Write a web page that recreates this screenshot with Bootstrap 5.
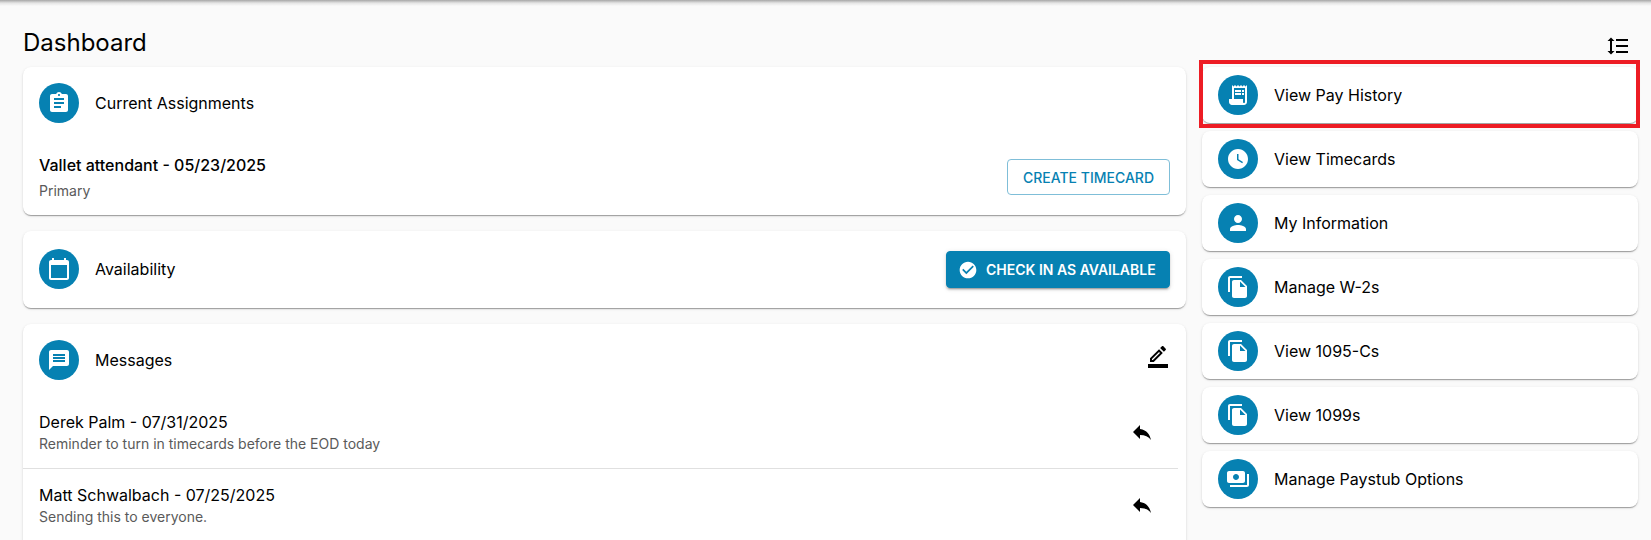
<!DOCTYPE html>
<html lang="en">
<head>
<meta charset="utf-8">
<title>Dashboard</title>
<link href="https://cdn.jsdelivr.net/npm/bootstrap@5.3.0/dist/css/bootstrap.min.css" rel="stylesheet">
<style>
html,body{height:540px;overflow:hidden}
body{background:#fafafa;font-family:Inter,"Noto Sans",sans-serif;color:#000}
.topshade{height:6px;background:linear-gradient(#a6a6a6,#e4e4e4 50%,#fafafa)}
.shell{padding:0 12px 0 23px;gap:16px}
.leftcol{width:1163px;flex:none}
.rightcol{width:436px;flex:none}
.pagetitle{font-size:24px;font-weight:400;line-height:32px;margin:0;padding-top:21px;height:61px}
.sorter{height:61px;padding-top:28px;padding-right:8px}
.panel{background:#fff;border-radius:8px;box-shadow:0 2px 1px -1px rgba(0,0,0,.2),0 1px 1px 0 rgba(0,0,0,.14),0 1px 3px 0 rgba(0,0,0,.12)}
.leftcol .panel+.panel{margin-top:16px}
.disc{width:40px;height:40px;border-radius:50%;background:#0681b2;flex:none}
.disc svg{width:24px;height:24px;fill:#fff}
.headrow{height:72px;padding:0 16px;gap:16px;font-size:16px}
.headrow.tall{height:77px;padding-bottom:1px}
.assign{padding:0 16px;height:76px}
.assign .ttl{font-size:16px;font-weight:500;line-height:24px;margin-top:-1px}
.muted{font-size:14px;color:#5a5a5a;line-height:20px}
.assign .muted{margin-top:4px}
.btn-outline-tc{--bs-btn-color:#0681b2;--bs-btn-border-color:#7fbed8;--bs-btn-hover-color:#0681b2;--bs-btn-hover-bg:#eef7fb;--bs-btn-hover-border-color:#7fbed8;font-size:14px;font-weight:500;height:36px;width:163px;padding:0;border-radius:4px;text-transform:uppercase}
.btn-fill-tc{--bs-btn-color:#fff;--bs-btn-bg:#0681b2;--bs-btn-border-color:#0681b2;--bs-btn-hover-color:#fff;--bs-btn-hover-bg:#0681b2;--bs-btn-hover-border-color:#0681b2;font-size:14px;font-weight:600;height:37px;width:224px;margin-top:1px;padding:0 0 0 11px;border-radius:4px;text-transform:uppercase;gap:8px;box-shadow:0 3px 1px -2px rgba(0,0,0,.2),0 2px 2px 0 rgba(0,0,0,.14),0 1px 5px 0 rgba(0,0,0,.12)}
.btn-fill-tc svg{width:20px;height:20px;fill:#fff}
.glyph{fill:#000;flex:none}
.penup{margin-bottom:8px}
.msgitem{margin:0 8px 0 0;padding:0 0 0 16px;height:72px}
.msgitem+.msgitem{border-top:1px solid #e0e0e0;height:73px}
.msglist{padding-bottom:24px}
.msgname{font-size:16px;line-height:24px}
.replyslot{width:36px;margin-right:18px}
.navitem{height:56px;padding:0 16px;gap:16px;font-size:16px;margin-bottom:8px}
.annot{position:absolute;left:-3px;right:-2px;top:-7px;bottom:-5px;border:4px solid #ed1c24;pointer-events:none}
</style>
</head>
<body>
<div class="topshade"></div>
<div class="d-flex shell">
  <main class="leftcol">
    <h1 class="pagetitle">Dashboard</h1>
    <section class="panel">
      <div class="d-flex align-items-center headrow">
        <span class="disc d-flex align-items-center justify-content-center"><svg viewBox="0 0 24 24"><path d="M19 3h-4.18C14.4 1.84 13.3 1 12 1c-1.3 0-2.4.84-2.82 2H5c-1.1 0-2 .9-2 2v14c0 1.1.9 2 2 2h14c1.1 0 2-.9 2-2V5c0-1.1-.9-2-2-2zm-7 0c.55 0 1 .45 1 1s-.45 1-1 1-1-.45-1-1 .45-1 1-1zm2 14H7v-2h7v2zm3-4H7v-2h10v2zm0-4H7V7h10v2z"/></svg></span>
        <span>Current Assignments</span>
      </div>
      <div class="d-flex justify-content-between align-items-center assign">
        <div><div class="ttl">Vallet attendant - 05/23/2025</div><div class="muted">Primary</div></div>
        <button type="button" class="btn btn-outline-tc">Create Timecard</button>
      </div>
    </section>
    <section class="panel">
      <div class="d-flex align-items-center headrow tall">
        <span class="disc d-flex align-items-center justify-content-center"><svg viewBox="0 0 24 24"><path d="M20 3h-1V1h-2v2H7V1H5v2H4c-1.1 0-2 .9-2 2v16c0 1.1.9 2 2 2h16c1.1 0 2-.9 2-2V5c0-1.1-.9-2-2-2zm0 18H4V8h16v13z"/></svg></span>
        <span class="flex-grow-1">Availability</span>
        <button type="button" class="btn btn-fill-tc d-flex align-items-center"><svg viewBox="0 0 24 24"><path d="M12 2C6.48 2 2 6.48 2 12s4.48 10 10 10 10-4.48 10-10S17.52 2 12 2zm-2 15l-5-5 1.41-1.41L10 14.17l7.59-7.59L19 8l-9 9z"/></svg>Check in as available</button>
      </div>
    </section>
    <section class="panel msglist">
      <div class="d-flex align-items-center headrow">
        <span class="disc d-flex align-items-center justify-content-center"><svg viewBox="0 0 24 24"><path d="M20 2H4c-1.1 0-1.99.9-1.99 2L2 22l4-4h14c1.1 0 2-.9 2-2V4c0-1.1-.9-2-2-2zm-2 12H6v-2h12v2zm0-3H6V9h12v2zm0-3H6V6h12v2z"/></svg></span>
        <span class="flex-grow-1">Messages</span>
        <svg class="glyph penup" width="24" height="24" viewBox="0 0 24 24"><path fill-rule="evenodd" d="M22 24H2v-4h20v4zM13.06 5.19l3.75 3.75L7.75 18H4v-3.75l9.06-9.06zm0 2.83L6 15.08V16h.92l7.06-7.06-.92-.92zM17.88 7.87l-3.75-3.75 1.83-1.83c.39-.39 1.02-.39 1.41 0l2.34 2.34c.39.39.39 1.02 0 1.41l-1.83 1.83z"/></svg>
      </div>
      <div class="d-flex justify-content-between align-items-center msgitem">
        <div><div class="msgname">Derek Palm - 07/31/2025</div><div class="muted">Reminder to turn in timecards before the EOD today</div></div>
        <span class="replyslot d-flex justify-content-center"><svg class="glyph" width="24" height="24" viewBox="0 0 24 24"><path d="M10 9V5l-7 7 7 7v-4.1c5 0 8.5 1.6 11 5.1-1-5-4-10-11-11z"/></svg></span>
      </div>
      <div class="d-flex justify-content-between align-items-center msgitem">
        <div><div class="msgname">Matt Schwalbach - 07/25/2025</div><div class="muted">Sending this to everyone.</div></div>
        <span class="replyslot d-flex justify-content-center"><svg class="glyph" width="24" height="24" viewBox="0 0 24 24"><path d="M10 9V5l-7 7 7 7v-4.1c5 0 8.5 1.6 11 5.1-1-5-4-10-11-11z"/></svg></span>
      </div>
    </section>
  </main>
  <aside class="rightcol">
    <div class="d-flex justify-content-end sorter"><svg class="glyph" width="24" height="24" viewBox="0 0 24 24"><path d="M6 7h2.5L5 3.5 1.5 7H4v10H1.5L5 20.5 8.5 17H6V7zm4-2v2h12V5H10zm0 14h12v-2H10v2zm0-6h12v-2H10v2z"/></svg></div>
    <div class="panel d-flex align-items-center navitem position-relative">
      <span class="disc d-flex align-items-center justify-content-center"><svg viewBox="0 0 24 24"><path d="M19.5 3.5 18 2l-1.5 1.5L15 2l-1.5 1.5L12 2l-1.5 1.5L9 2 7.5 3.5 6 2v14H3v3c0 1.66 1.34 3 3 3h12c1.66 0 3-1.34 3-3V2l-1.5 1.5zM19 19c0 .55-.45 1-1 1s-1-.45-1-1v-3H8V5h11v14z"/><path d="M9 7h6v2H9zm7 0h2v2h-2zm-7 3h6v2H9zm7 0h2v2h-2z"/></svg></span>
      <span>View Pay History</span>
      <span class="annot"></span>
    </div>
    <div class="panel d-flex align-items-center navitem">
      <span class="disc d-flex align-items-center justify-content-center"><svg viewBox="0 0 24 24"><path d="M11.99 2C6.47 2 2 6.48 2 12s4.47 10 9.99 10C17.52 22 22 17.52 22 12S17.52 2 11.99 2zm4.24 14.24L11 13V7h1.5v5.25l4.5 2.67-.77 1.32z"/></svg></span>
      <span>View Timecards</span>
    </div>
    <div class="panel d-flex align-items-center navitem">
      <span class="disc d-flex align-items-center justify-content-center"><svg viewBox="0 0 24 24"><path d="M12 12c2.21 0 4-1.79 4-4s-1.79-4-4-4-4 1.79-4 4 1.79 4 4 4zm0 2c-2.67 0-8 1.34-8 4v2h16v-2c0-2.66-5.33-4-8-4z"/></svg></span>
      <span>My Information</span>
    </div>
    <div class="panel d-flex align-items-center navitem">
      <span class="disc d-flex align-items-center justify-content-center"><svg viewBox="0 0 24 24"><path d="M16 1H4c-1.1 0-2 .9-2 2v14h2V3h12V1zm-1 4l6 6v10c0 1.1-.9 2-2 2H7.99C6.89 23 6 22.1 6 21l.01-14c0-1.1.89-2 1.99-2h7zm-1 7h5.5L14 6.5V12z"/></svg></span>
      <span>Manage W-2s</span>
    </div>
    <div class="panel d-flex align-items-center navitem">
      <span class="disc d-flex align-items-center justify-content-center"><svg viewBox="0 0 24 24"><path d="M16 1H4c-1.1 0-2 .9-2 2v14h2V3h12V1zm-1 4l6 6v10c0 1.1-.9 2-2 2H7.99C6.89 23 6 22.1 6 21l.01-14c0-1.1.89-2 1.99-2h7zm-1 7h5.5L14 6.5V12z"/></svg></span>
      <span>View 1095-Cs</span>
    </div>
    <div class="panel d-flex align-items-center navitem">
      <span class="disc d-flex align-items-center justify-content-center"><svg viewBox="0 0 24 24"><path d="M16 1H4c-1.1 0-2 .9-2 2v14h2V3h12V1zm-1 4l6 6v10c0 1.1-.9 2-2 2H7.99C6.89 23 6 22.1 6 21l.01-14c0-1.1.89-2 1.99-2h7zm-1 7h5.5L14 6.5V12z"/></svg></span>
      <span>View 1099s</span>
    </div>
    <div class="panel d-flex align-items-center navitem">
      <span class="disc d-flex align-items-center justify-content-center"><svg viewBox="0 0 24 24"><path d="M19 14V6c0-1.1-.9-2-2-2H3c-1.1 0-2 .9-2 2v8c0 1.1.9 2 2 2h14c1.1 0 2-.9 2-2zm-9-1c-1.66 0-3-1.34-3-3s1.34-3 3-3 3 1.34 3 3-1.34 3-3 3zm13-6v11c0 1.1-.9 2-2 2H4v-2h17V7h2z"/></svg></span>
      <span>Manage Paystub Options</span>
    </div>
  </aside>
</div>
<script src="https://cdn.jsdelivr.net/npm/bootstrap@5.3.0/dist/js/bootstrap.bundle.min.js"></script>
</body>
</html>
